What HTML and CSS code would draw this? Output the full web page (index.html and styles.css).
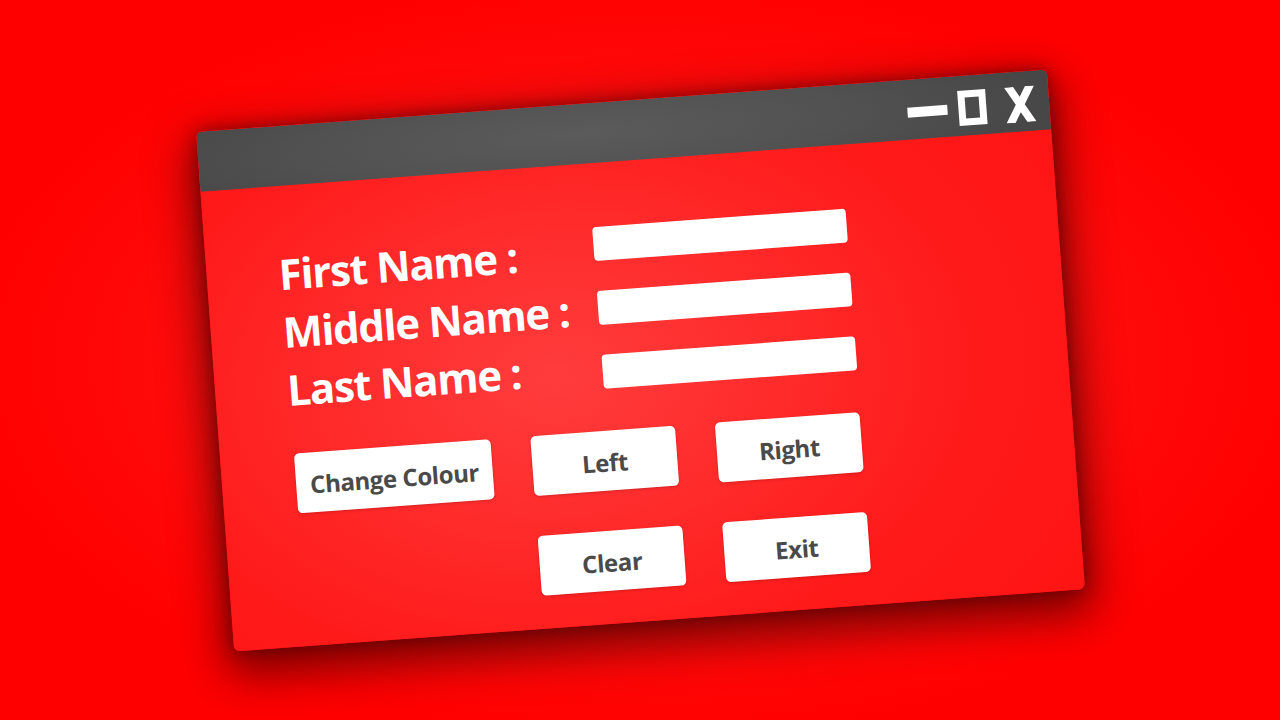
FILE: index.html
```html
<!DOCTYPE html>
<html lang="en">
<head>
<meta charset="utf-8">
<title>Form Window</title>
<link rel="stylesheet" href="styles.css">
</head>
<body>
<div class="stage">
  <div class="window">
    <div class="titlebar">
      <span class="ctl-min"></span>
      <span class="ctl-max"></span>
      <svg class="ctl-close" width="30" height="36" viewBox="0 0 30 36"><polygon points="0,0 9,0 15,10.3 21,0 30,0 19.5,18 30,36 21,36 15,25.7 9,36 0,36 10.5,18" fill="#ffffff"/></svg>
    </div>
    <div class="content">
      <div class="form">
        <div class="labels">
          <div class="label">First Name :</div>
          <div class="label">Middle Name :</div>
          <div class="label">Last Name :</div>
        </div>
        <div class="fields">
          <div class="field"></div>
          <div class="field"></div>
          <div class="field"></div>
        </div>
      </div>
      <div class="buttons">
        <div class="btn">Change Colour</div>
        <div class="btn">Left</div>
        <div class="btn">Right</div>
        <div class="btn clear">Clear</div>
        <div class="btn">Exit</div>
      </div>
    </div>
  </div>
</div>
</body>
</html>
```

FILE: styles.css
```css
html, body {
  margin: 0;
  padding: 0;
}
body {
  width: 1280px;
  height: 720px;
  overflow: hidden;
  background: radial-gradient(ellipse at 50% 50%, #ff1c1c 0%, #ff0d0d 45%, #ff0000 75%);
  font-family: "Open Sans", "DejaVu Sans", sans-serif;
}
.stage {
  width: 1280px;
  height: 720px;
  display: flex;
  align-items: center;
  justify-content: center;
}
.window {
  width: 853px;
  height: 521px;
  transform: rotate(-4.2deg);
  border-radius: 6px;
  overflow: hidden;
  display: flex;
  flex-direction: column;
  box-shadow: 0 16px 44px 8px rgba(40, 0, 0, 0.62), 0 0 16px rgba(40, 0, 0, 0.45);
  background: radial-gradient(ellipse 70% 80% at 40% 52%, #ff3c3c 0%, #ff2c2c 35%, #ff1a1a 70%, #ff1414 100%);
}
.titlebar {
  height: 60px;
  flex: 0 0 60px;
  box-sizing: border-box;
  padding-top: 5px;
  display: flex;
  align-items: center;
  justify-content: flex-end;
  padding-right: 14px;
  background: radial-gradient(ellipse 60% 140% at 45% 50%, #5b5b5b 0%, #525252 50%, #454545 100%);
}
.ctl-min {
  width: 40px;
  height: 10px;
  background: #ffffff;
  margin-right: 11px;
}
.ctl-max {
  width: 14px;
  height: 21px;
  border: 7px solid #ffffff;
  margin-right: 19px;
}
.ctl-close {
  display: block;
}
.content {
  flex: 1;
  padding-left: 74px;
}
.form {
  height: 268px;
  display: grid;
  grid-template-columns: 314px 254px;
  align-items: start;
}
.labels {
  padding-top: 59px;
  margin-left: -2px;
}
.label {
  font-size: 42px;
  line-height: 58px;
  font-weight: 750;
  color: #ffffff;
  letter-spacing: -1.2px;
  white-space: nowrap;
}
.fields {
  padding-top: 64px;
  display: flex;
  flex-direction: column;
  gap: 30px;
}
.field {
  height: 34px;
  background: #ffffff;
  border-radius: 4px;
}
.buttons {
  display: grid;
  grid-template-columns: 197px 145px 145px;
  grid-auto-rows: 60px;
  column-gap: 40px;
  row-gap: 40px;
}
.btn {
  background: #ffffff;
  border-radius: 5px;
  display: flex;
  align-items: center;
  justify-content: center;
  padding-top: 3px;
  box-sizing: border-box;
  font-size: 24px;
  font-weight: 750;
  color: #4a4a4a;
  letter-spacing: -0.4px;
  box-shadow: 0 1px 3px rgba(80, 0, 0, 0.25);
}
.clear {
  grid-column: 2;
}
```
